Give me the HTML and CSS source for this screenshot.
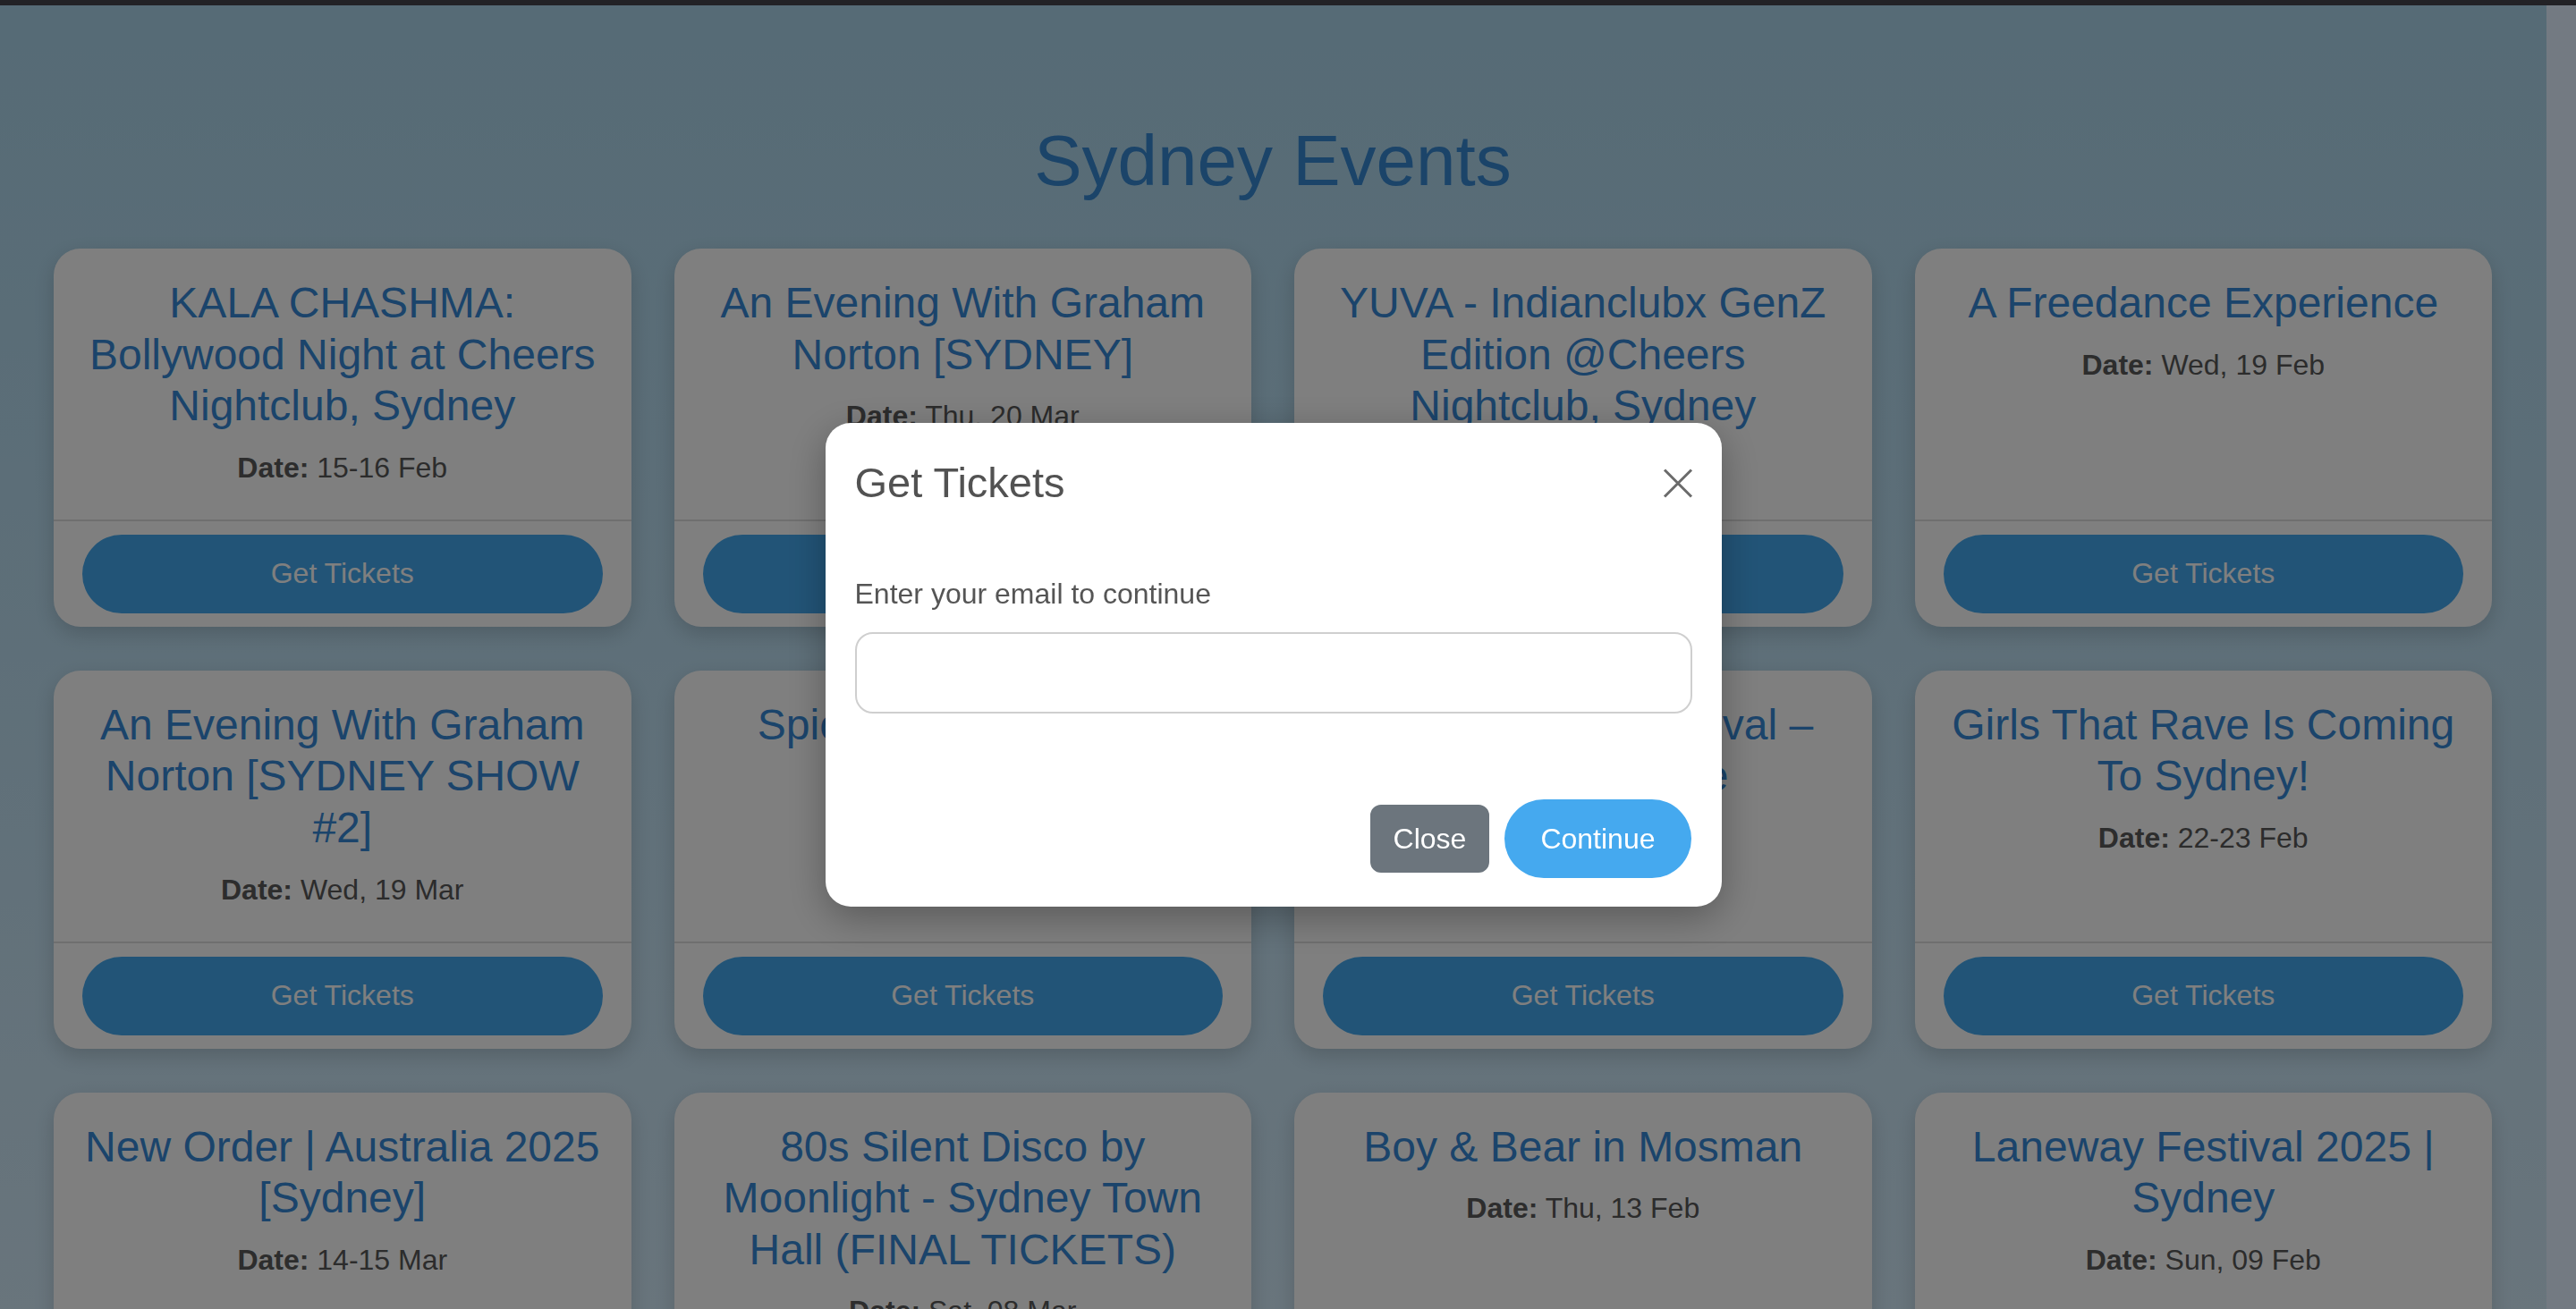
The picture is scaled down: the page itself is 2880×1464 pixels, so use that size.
FILE: index.html
```html
<!DOCTYPE html>
<html lang="en">
<head>
<meta charset="utf-8">
<title>Sydney Events</title>
<link rel="stylesheet" href="styles.css">
</head>
<body>
  <div class="topbar"></div>
  <div class="viewport">
    <main class="page">
      <h1 class="page-title">Sydney Events</h1>
      <div class="grid">
        <article class="card">
          <div class="card-body">
            <h5 class="card-title">KALA CHASHMA: Bollywood Night at Cheers Nightclub, Sydney</h5>
            <p class="card-date"><strong>Date:</strong> 15-16 Feb</p>
          </div>
          <div class="card-footer"><button class="btn-tickets">Get Tickets</button></div>
        </article>
        <article class="card">
          <div class="card-body">
            <h5 class="card-title">An Evening With Graham Norton [SYDNEY]</h5>
            <p class="card-date"><strong>Date:</strong> Thu, 20 Mar</p>
          </div>
          <div class="card-footer"><button class="btn-tickets">Get Tickets</button></div>
        </article>
        <article class="card">
          <div class="card-body">
            <h5 class="card-title">YUVA - Indianclubx GenZ Edition @Cheers Nightclub, Sydney</h5>
            <p class="card-date"><strong>Date:</strong> Sat, 15 Feb</p>
          </div>
          <div class="card-footer"><button class="btn-tickets">Get Tickets</button></div>
        </article>
        <article class="card">
          <div class="card-body">
            <h5 class="card-title">A Freedance Experience</h5>
            <p class="card-date"><strong>Date:</strong> Wed, 19 Feb</p>
          </div>
          <div class="card-footer"><button class="btn-tickets">Get Tickets</button></div>
        </article>

        <article class="card">
          <div class="card-body">
            <h5 class="card-title">An Evening With Graham Norton [SYDNEY SHOW #2]</h5>
            <p class="card-date"><strong>Date:</strong> Wed, 19 Mar</p>
          </div>
          <div class="card-footer"><button class="btn-tickets">Get Tickets</button></div>
        </article>
        <article class="card">
          <div class="card-body">
            <h5 class="card-title">Spice Market Festival Sydney 2025</h5>
            <p class="card-date"><strong>Date:</strong> Sat, 22 Feb</p>
          </div>
          <div class="card-footer"><button class="btn-tickets">Get Tickets</button></div>
        </article>
        <article class="card">
          <div class="card-body">
            <h5 class="card-title">Sydney Lunar Festival – Dragon Parade</h5>
            <p class="card-date"><strong>Date:</strong> Fri, 14 Feb</p>
          </div>
          <div class="card-footer"><button class="btn-tickets">Get Tickets</button></div>
        </article>
        <article class="card">
          <div class="card-body">
            <h5 class="card-title">Girls That Rave Is Coming To Sydney!</h5>
            <p class="card-date"><strong>Date:</strong> 22-23 Feb</p>
          </div>
          <div class="card-footer"><button class="btn-tickets">Get Tickets</button></div>
        </article>

        <article class="card">
          <div class="card-body">
            <h5 class="card-title">New Order | Australia 2025 [Sydney]</h5>
            <p class="card-date"><strong>Date:</strong> 14-15 Mar</p>
          </div>
          <div class="card-footer"><button class="btn-tickets">Get Tickets</button></div>
        </article>
        <article class="card">
          <div class="card-body">
            <h5 class="card-title">80s Silent Disco by Moonlight - Sydney Town Hall (FINAL TICKETS)</h5>
            <p class="card-date"><strong>Date:</strong> Sat, 08 Mar</p>
          </div>
          <div class="card-footer"><button class="btn-tickets">Get Tickets</button></div>
        </article>
        <article class="card">
          <div class="card-body">
            <h5 class="card-title">Boy &amp; Bear in Mosman</h5>
            <p class="card-date"><strong>Date:</strong> Thu, 13 Feb</p>
          </div>
          <div class="card-footer"><button class="btn-tickets">Get Tickets</button></div>
        </article>
        <article class="card">
          <div class="card-body">
            <h5 class="card-title">Laneway Festival 2025 | Sydney</h5>
            <p class="card-date"><strong>Date:</strong> Sun, 09 Feb</p>
          </div>
          <div class="card-footer"><button class="btn-tickets">Get Tickets</button></div>
        </article>
      </div>
    </main>
    <div class="scrollbar"></div>
  </div>

  <div class="backdrop"></div>
  <div class="modal-wrap">
    <div class="modal" role="dialog">
      <div class="modal-header">
        <h5 class="modal-title">Get Tickets</h5>
        <button class="btn-close" aria-label="Close">
          <svg width="34" height="33" viewBox="0 0 34 33"><path d="M2 1.5 L32 31.5 M32 1.5 L2 31.5" stroke="#6b6b6b" stroke-width="3" fill="none"/></svg>
        </button>
      </div>
      <div class="modal-body">
        <label class="modal-label" for="email">Enter your email to continue</label>
        <input class="modal-input" id="email" type="email">
      </div>
      <div class="modal-footer">
        <button class="btn-close-text">Close</button>
        <button class="btn-continue">Continue</button>
      </div>
    </div>
  </div>
</body>
</html>
```

FILE: styles.css
```css
html, body {
  margin: 0;
  padding: 0;
  height: 100%;
  overflow: hidden;
}

body {
  font-family: "Liberation Sans", Arial, sans-serif;
  display: flex;
  flex-direction: column;
}

.topbar {
  height: 6px;
  flex: none;
  background: #222226;
  position: relative;
  z-index: 30;
}

.viewport {
  flex: 1;
  display: flex;
  min-height: 0;
}

.page {
  flex: 1 1 auto;
  min-width: 0;
  overflow: hidden;
  padding: 0 61px 0 60px;
  background: linear-gradient(180deg, #acd6ec 0%, #bddff2 50%, #d2eaf9 100%);
}

.scrollbar {
  width: 33px;
  flex: none;
  background: #737a82;
  position: relative;
  z-index: 30;
}

.page-title {
  margin: 126px 0 50px;
  text-align: center;
  font-size: 80px;
  line-height: 1.2;
  font-weight: normal;
  color: #3688d2;
}

.grid {
  display: grid;
  grid-template-columns: repeat(4, 1fr);
  gap: 49px 48px;
}

.card {
  background: #fff;
  border-radius: 30px;
  display: flex;
  flex-direction: column;
  box-shadow: 0 8px 22px rgba(0, 0, 0, 0.16);
  overflow: hidden;
}

.card-body {
  flex: 1;
  padding: 32px 32px 0;
  text-align: center;
}

.card-title {
  margin: 0 0 16px;
  font-size: 48px;
  line-height: 1.2;
  font-weight: normal;
  color: #3789d6;
}

.card-date {
  margin: 0 0 34px;
  font-size: 32px;
  line-height: 1.5;
  color: #585858;
}

.card-date strong {
  font-weight: bold;
  color: #5a5a5a;
}

.card-footer {
  border-top: 2px solid rgba(0, 0, 0, 0.13);
  padding: 15px 32px 15px;
}

.btn-tickets {
  display: block;
  width: 100%;
  height: 88px;
  border: none;
  border-radius: 44px;
  background: #45a9ef;
  color: #fff;
  font-family: inherit;
  font-size: 32px;
}

.backdrop {
  position: fixed;
  top: 6px;
  left: 0;
  right: 33px;
  bottom: 0;
  background: rgba(0, 0, 0, 0.5);
  z-index: 10;
}

.modal-wrap {
  position: fixed;
  top: 0;
  left: 0;
  right: 33px;
  bottom: 0;
  z-index: 20;
  display: flex;
  justify-content: center;
  align-items: flex-start;
  padding-top: 473px;
}

.modal {
  width: 1002px;
  background: #fff;
  border-radius: 28px;
  box-shadow: 0 12px 44px rgba(0, 0, 0, 0.3);
}

.modal-header {
  display: flex;
  justify-content: space-between;
  align-items: center;
  padding: 32px 32px 32px 33px;
}

.modal-title {
  margin: 0;
  font-size: 47px;
  line-height: 1.5;
  font-weight: normal;
  color: #525252;
}

.btn-close {
  width: 34px;
  height: 33px;
  padding: 0;
  border: none;
  background: transparent;
  display: flex;
}

.modal-body {
  padding: 32px 33px 32px 33px;
}

.modal-label {
  display: block;
  margin-bottom: 19px;
  font-size: 32px;
  line-height: 1.5;
  color: #555;
}

.modal-input {
  display: block;
  box-sizing: border-box;
  width: 100%;
  height: 91px;
  margin: 0 0 32px;
  border: 2px solid #cfcfcf;
  border-radius: 20px;
  background: #fff;
}

.modal-footer {
  display: flex;
  justify-content: flex-end;
  align-items: center;
  gap: 17px;
  padding: 32px 34px 32px 33px;
}

.btn-close-text {
  height: 76px;
  padding: 12px 24px;
  border: 2px solid #6c757d;
  border-radius: 12px;
  background: #6c757d;
  color: #fff;
  font-family: inherit;
  font-size: 32px;
  line-height: 48px;
}

.btn-continue {
  height: 88px;
  padding: 20px 40px;
  border: none;
  border-radius: 44px;
  background: #45a9ef;
  color: #fff;
  font-family: inherit;
  font-size: 32px;
  line-height: 48px;
}
```
